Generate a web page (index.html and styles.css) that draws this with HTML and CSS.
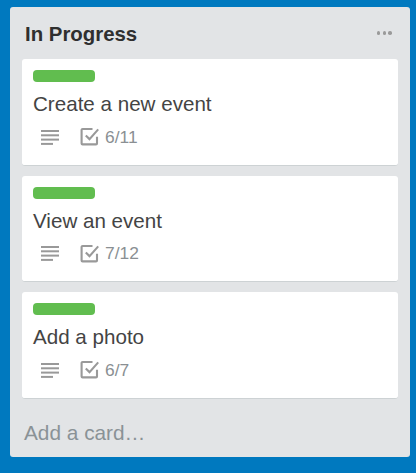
FILE: index.html
```html
<!DOCTYPE html>
<html>
<head>
<meta charset="utf-8">
<link rel="stylesheet" href="styles.css">
</head>
<body>
<div class="list">
  <div class="list-header">
    <h2 class="list-title">In Progress</h2>
    <div class="list-menu"><span></span><span></span><span></span></div>
  </div>
  <div class="cards">
    <div class="card">
      <div class="label"></div>
      <div class="card-title">Create a new event</div>
      <div class="badges">
        <svg class="icon-desc" width="18" height="16" viewBox="0 0 18 16"><rect x="0" y="1" width="18" height="2" fill="#999"/><rect x="0" y="5.3" width="18" height="2" fill="#999"/><rect x="0" y="9.6" width="18" height="2" fill="#999"/><rect x="0" y="13.9" width="12" height="2" fill="#999"/></svg>
        <span class="check">
          <svg width="20" height="19" viewBox="0 0 20 19"><path d="M12.5 2 H2.6 a1 1 0 0 0 -1 1 V16.4 a1 1 0 0 0 1 1 H16 a1 1 0 0 0 1 -1 V9.8" fill="none" stroke="#999" stroke-width="2.1"/><path d="M5.8 8.4 L9.5 12.1 L18.2 2.4" fill="none" stroke="#999" stroke-width="2.1"/></svg>
          <span class="count">6/11</span>
        </span>
      </div>
    </div>
    <div class="card">
      <div class="label"></div>
      <div class="card-title">View an event</div>
      <div class="badges">
        <svg class="icon-desc" width="18" height="16" viewBox="0 0 18 16"><rect x="0" y="1" width="18" height="2" fill="#999"/><rect x="0" y="5.3" width="18" height="2" fill="#999"/><rect x="0" y="9.6" width="18" height="2" fill="#999"/><rect x="0" y="13.9" width="12" height="2" fill="#999"/></svg>
        <span class="check">
          <svg width="20" height="19" viewBox="0 0 20 19"><path d="M12.5 2 H2.6 a1 1 0 0 0 -1 1 V16.4 a1 1 0 0 0 1 1 H16 a1 1 0 0 0 1 -1 V9.8" fill="none" stroke="#999" stroke-width="2.1"/><path d="M5.8 8.4 L9.5 12.1 L18.2 2.4" fill="none" stroke="#999" stroke-width="2.1"/></svg>
          <span class="count">7/12</span>
        </span>
      </div>
    </div>
    <div class="card">
      <div class="label"></div>
      <div class="card-title">Add a photo</div>
      <div class="badges">
        <svg class="icon-desc" width="18" height="16" viewBox="0 0 18 16"><rect x="0" y="1" width="18" height="2" fill="#999"/><rect x="0" y="5.3" width="18" height="2" fill="#999"/><rect x="0" y="9.6" width="18" height="2" fill="#999"/><rect x="0" y="13.9" width="12" height="2" fill="#999"/></svg>
        <span class="check">
          <svg width="20" height="19" viewBox="0 0 20 19"><path d="M12.5 2 H2.6 a1 1 0 0 0 -1 1 V16.4 a1 1 0 0 0 1 1 H16 a1 1 0 0 0 1 -1 V9.8" fill="none" stroke="#999" stroke-width="2.1"/><path d="M5.8 8.4 L9.5 12.1 L18.2 2.4" fill="none" stroke="#999" stroke-width="2.1"/></svg>
          <span class="count">6/7</span>
        </span>
      </div>
    </div>
  </div>
  <div class="add-card">Add a card…</div>
</div>
</body>
</html>
```
FILE: styles.css
```css
html, body {
  margin: 0;
  padding: 0;
}
body {
  width: 416px;
  height: 473px;
  background: #0079bf;
  font-family: "Liberation Sans", Arial, sans-serif;
  overflow: hidden;
}
.list {
  margin: 7px 6px 0 10px;
  width: 400px;
  background: #e2e4e6;
  border-radius: 3px;
}
.list-header {
  display: flex;
  justify-content: space-between;
  align-items: center;
  padding: 14px 18px 0 15px;
}
.list-title {
  margin: 0;
  font-size: 20.4px;
  line-height: 26px;
  font-weight: bold;
  color: #2f2f2f;
}
.list-menu {
  display: flex;
  gap: 2.2px;
  margin-top: -2px;
}
.list-menu span {
  width: 3.6px;
  height: 3.6px;
  border-radius: 50%;
  background: #9a9a9a;
}
.cards {
  display: flex;
  flex-direction: column;
  gap: 10px;
  padding: 0 12px;
  margin-top: 12px;
}
.card {
  background: #fff;
  border-radius: 3px;
  border-bottom: 1px solid #cdd2d4;
  padding: 11px 11px 14.5px 11px;
}
.label {
  width: 62px;
  height: 12px;
  border-radius: 4px;
  background: #61bd4f;
  margin-bottom: 9px;
}
.card-title {
  font-size: 20.6px;
  line-height: 26px;
  color: #444;
}
.badges {
  display: flex;
  align-items: center;
  height: 27px;
  margin-top: 6px;
  padding-left: 8px;
}
.icon-desc {
  display: block;
}
.check {
  display: flex;
  align-items: center;
  margin-left: 21px;
}
.check svg {
  display: block;
}
.count {
  margin-left: 5px;
  font-size: 17.4px;
  color: #8a8f93;
  line-height: 20px;
}
.add-card {
  padding: 21px 14px 11px 14px;
  font-size: 20.8px;
  line-height: 26px;
  color: #8a9296;
}
```
